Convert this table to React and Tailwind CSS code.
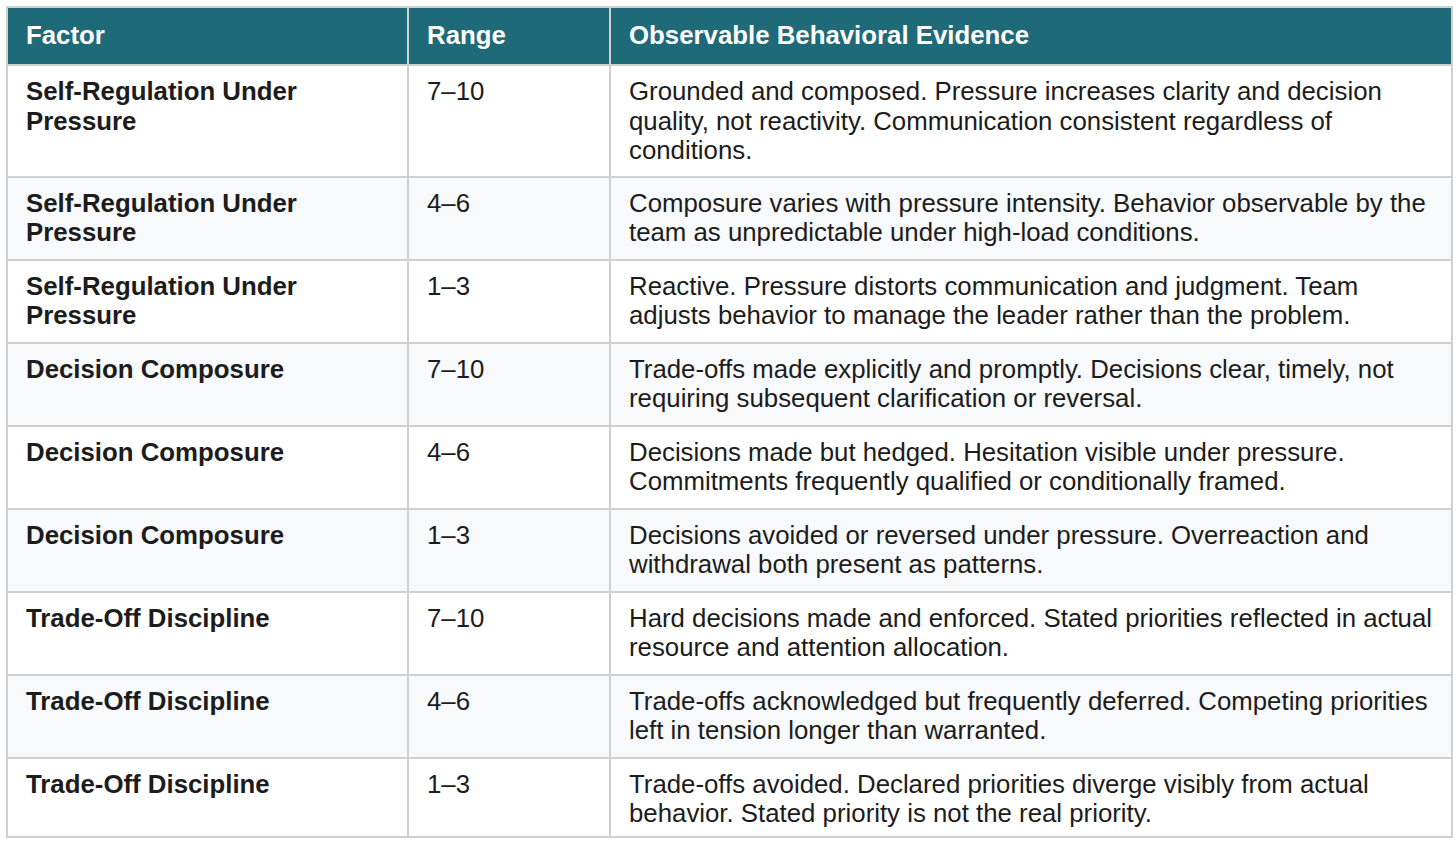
const rows = [
  ['Self-Regulation Under Pressure', '7–10', 'Grounded and composed. Pressure increases clarity and decision quality, not reactivity. Communication consistent regardless of conditions.'],
  ['Self-Regulation Under Pressure', '4–6', 'Composure varies with pressure intensity. Behavior observable by the team as unpredictable under high-load conditions.'],
  ['Self-Regulation Under Pressure', '1–3', 'Reactive. Pressure distorts communication and judgment. Team adjusts behavior to manage the leader rather than the problem.'],
  ['Decision Composure', '7–10', 'Trade-offs made explicitly and promptly. Decisions clear, timely, not requiring subsequent clarification or reversal.'],
  ['Decision Composure', '4–6', 'Decisions made but hedged. Hesitation visible under pressure. Commitments frequently qualified or conditionally framed.'],
  ['Decision Composure', '1–3', 'Decisions avoided or reversed under pressure. Overreaction and withdrawal both present as patterns.'],
  ['Trade-Off Discipline', '7–10', 'Hard decisions made and enforced. Stated priorities reflected in actual resource and attention allocation.'],
  ['Trade-Off Discipline', '4–6', 'Trade-offs acknowledged but frequently deferred. Competing priorities left in tension longer than warranted.'],
  ['Trade-Off Discipline', '1–3', 'Trade-offs avoided. Declared priorities diverge visibly from actual behavior. Stated priority is not the real priority.'],
];

export default function App() {
  return (
    <div className="min-h-screen bg-white pl-[6px] pt-[6px] font-['Liberation_Sans',Arial,sans-serif]">
      <table className="w-[1447px] table-fixed border-collapse text-[25.8px] leading-[29.5px] text-[#1c1c1c]">
        <colgroup>
          <col className="w-[401px]" />
          <col className="w-[202px]" />
          <col />
        </colgroup>
        <thead>
          <tr className="bg-[#1e6a78] text-white">
            <th className="h-[58px] border-2 border-[#d0d0d0] px-[18px] text-left font-bold">Factor</th>
            <th className="border-2 border-[#d0d0d0] px-[18px] text-left font-bold">Range</th>
            <th className="border-2 border-[#d0d0d0] px-[18px] text-left font-bold">Observable Behavioral Evidence</th>
          </tr>
        </thead>
        <tbody>
          {rows.map((r, i) => {
            let pad = 'pt-[11px] pb-[11px]';
            if (i === 0) pad = 'pt-[11px] pb-[10px]';
            if (i === rows.length - 1) pad = 'pt-[11px] pb-[7px]';
            return (
              <tr key={i} className={i % 2 === 1 ? 'bg-[#f7f9fb]' : 'bg-white'}>
                <td className={`border-2 border-[#d0d0d0] px-[18px] align-top font-bold ${pad}`}>{r[0]}</td>
                <td className={`border-2 border-[#d0d0d0] px-[18px] align-top ${pad}`}>{r[1]}</td>
                <td className={`border-2 border-[#d0d0d0] px-[18px] align-top ${pad}`}>{r[2]}</td>
              </tr>
            );
          })}
        </tbody>
      </table>
    </div>
  );
}
